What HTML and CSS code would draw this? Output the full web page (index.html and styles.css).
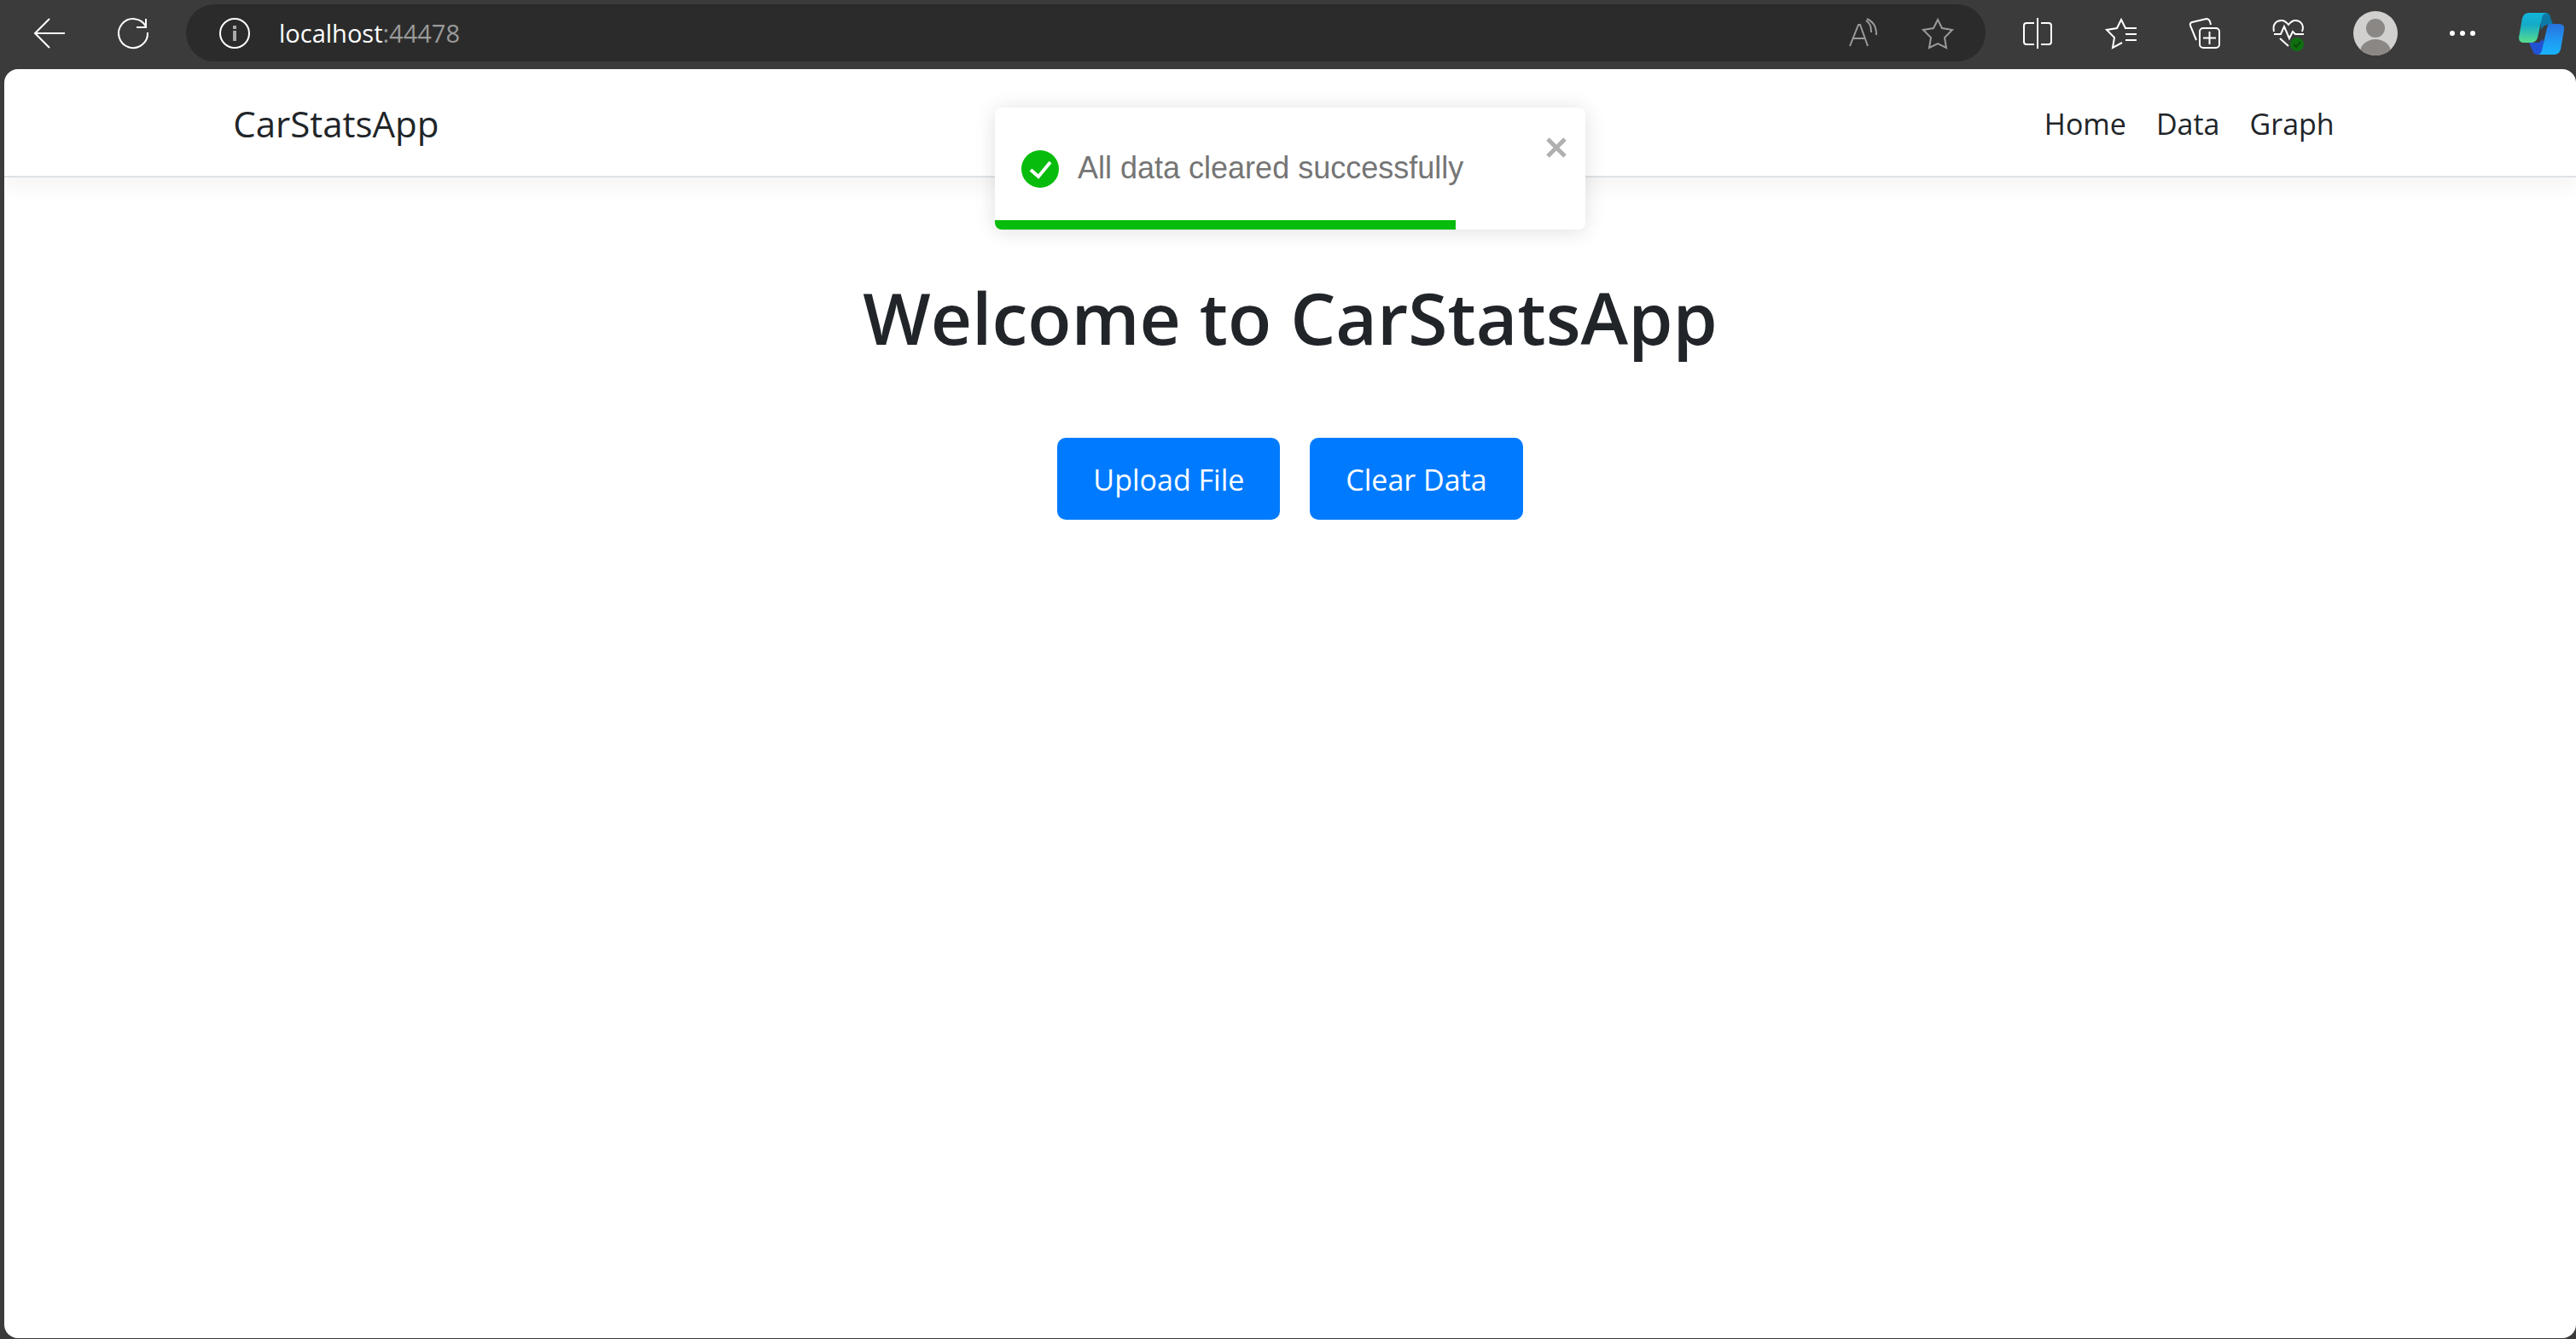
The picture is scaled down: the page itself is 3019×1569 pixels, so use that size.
FILE: index.html
```html
<!DOCTYPE html>
<html lang="en">
<head>
<meta charset="utf-8">
<meta name="viewport" content="width=device-width, initial-scale=1">
<title>CarStatsApp</title>
<link rel="stylesheet" href="styles.css">
</head>
<body>
<div class="toolbar">
  <button class="tool" type="button" aria-label="Back">
    <svg class="icon" viewBox="0 0 36 36"><path d="M36 18H1M18 1 1 18l17 17"/></svg>
  </button>
  <button class="tool" type="button" aria-label="Refresh">
    <svg class="icon" viewBox="0 0 36 36"><path d="M33 10A17 17 0 1 0 35 17M33 1v10H22"/></svg>
  </button>
  <div class="address">
    <svg class="icon" viewBox="0 0 36 36"><circle cx="18" cy="18" r="17"/><path class="info-mark" d="M18 15v12M18 9v4"/></svg>
    <div class="url"><span class="host">localhost</span>:44478</div>
    <button class="address-tool" type="button" aria-label="Read aloud">
      <svg class="icon" viewBox="0 0 36 36"><path d="M2 33 12 8h2l9 25M6 24h14M21 3c5 4 6 7 6 14M22 1c8 4 11 9 11 19"/></svg>
    </button>
    <button class="address-tool" type="button" aria-label="Add to favorites">
      <svg class="icon" viewBox="0 0 36 36"><path d="M18 2l5 10 12 2-9 9 2 12-10-5-10 5 2-12-9-9 12-2z"/></svg>
    </button>
  </div>
  <button class="tool" type="button" aria-label="Split screen">
    <svg class="icon" viewBox="0 0 36 36"><path d="M14 6H5q-3 0-3 3v19q0 3 3 3h9M22 6h9q3 0 3 3v19q0 3-3 3h-9M18 0v36"/></svg>
  </button>
  <button class="tool" type="button" aria-label="Favorites">
    <svg class="icon" viewBox="0 0 36 36"><path d="M36 12H23L18 2l-5 10-12 2 9 9-2 12 11-6M23 19h13M23 26h13"/></svg>
  </button>
  <button class="tool" type="button" aria-label="Collections">
    <svg class="icon" viewBox="0 0 36 36"><rect x="12" y="12" width="23" height="23" rx="4"/><path d="M23.500 16v15M16 23.500h15M8 26 1 9q-1-3 2-4l17-4q4 0 5 7"/></svg>
  </button>
  <button class="tool" type="button" aria-label="Browser essentials">
    <svg class="icon" viewBox="0 0 36 36"><path d="M1 16C-1 7 4 3 10 3q4 0 8 5 4-5 8-5c6 0 11 5 8 13M1 19h8l4-9 6 14 4-8 3 3h10M8 24l10 9"/><circle class="ok-dot" cx="28" cy="31" r="8"/><path class="ok-tick" d="M24 31l3 3 5-6"/></svg>
  </button>
  <button class="tool tool-wide" type="button" aria-label="Profile">
    <svg class="avatar" viewBox="0 0 52 52"><clipPath id="face"><circle cx="26" cy="26" r="26"/></clipPath><g clip-path="url(#face)"><path fill="#d2d0ce" d="M0 0h52v52H0z"/><circle cx="26" cy="20" r="11" fill="#8a8785"/><ellipse cx="26" cy="48" rx="18" ry="15" fill="#8a8785"/></g></svg>
  </button>
  <button class="tool" type="button" aria-label="Settings and more">
    <svg class="icon dots" viewBox="0 0 36 36"><circle cx="6" cy="18" r="3"/><circle cx="18" cy="18" r="3"/><circle cx="30" cy="18" r="3"/></svg>
  </button>
  <button class="tool tool-last" type="button" aria-label="Copilot">
    <svg class="copilot" viewBox="0 0 54 50">
      <defs>
        <linearGradient id="teal" x1="0" y1="0" x2="0" y2="1"><stop offset="0" stop-color="#12b5dc"/><stop offset=".4" stop-color="#14abc8"/><stop offset="1" stop-color="#58de8c"/></linearGradient>
        <linearGradient id="blue" x1="0" y1="0" x2="0" y2="1"><stop offset="0" stop-color="#2870de"/><stop offset=".5" stop-color="#2096f2"/><stop offset="1" stop-color="#18b4fa"/></linearGradient>
      </defs>
      <path fill="#0b78a6" d="M25 1h7q4 0 5 5l3 9h-6q-5 0-8 6z"/>
      <path fill="#2252d4" d="M12 36h9q5 0 7-5l2 8-4 11h-4q-5 0-6-5z"/>
      <path fill="url(#teal)" d="M12 1h21q-5 1-6 6l-5 23q-2 6-8 6H6q-6 0-6-6L4 7q2-6 8-6z"/>
      <path fill="url(#blue)" d="M37 14h10q7 0 6 7l-4 23q-2 6-8 6H23q3-1 4-5l6-26q1-5 4-5z"/>
    </svg>
  </button>
</div>
<div class="page">
  <header class="navbar">
    <a class="brand" href="#">CarStatsApp</a>
    <nav class="links">
      <a href="#">Home</a>
      <a href="#">Data</a>
      <a href="#">Graph</a>
    </nav>
  </header>
  <main class="content">
    <h1 class="title">Welcome to CarStatsApp</h1>
    <div class="actions">
      <button class="btn" type="button">Upload File</button>
      <button class="btn" type="button">Clear Data</button>
    </div>
  </main>
  <div class="toast" role="alert">
    <svg class="toast-icon" viewBox="0 0 44 44"><circle cx="22" cy="22" r="22" fill="#07bc0c"/><path d="M11 23l9 8 14-17" fill="none" stroke="#fff" stroke-width="4"/></svg>
    <span class="toast-text">All data cleared successfully</span>
    <button class="toast-close" type="button" aria-label="Close">
      <svg viewBox="0 0 24 24"><path d="M2 2l20 20M22 2 2 22"/></svg>
    </button>
    <div class="toast-progress" style="width: 78%"></div>
  </div>
</div>
</body>
</html>
```
FILE: styles.css
```css
* { box-sizing: border-box; }

body {
  margin: 0;
  min-height: 100vh;
  display: flex;
  flex-direction: column;
  background: #3b3b3b;
  color: #212529;
  font-family: "Open Sans", "Noto Sans", sans-serif;
  font-size: 34px;
}

button {
  border: 0;
  padding: 0;
  background: none;
  font: inherit;
}

svg { display: block; }

a { color: inherit; text-decoration: none; }

/* Browser toolbar */
.toolbar {
  display: flex;
  align-items: center;
  padding: 5px 0 9px 9px;
  color: #fff;
}

.tool {
  flex: none;
  width: 98px;
  display: flex;
  justify-content: center;
  color: #fff;
}

.tool-wide { width: 106px; }
.tool-last { width: 84px; padding-left: 4px; }

.icon {
  flex: none;
  width: 36px;
  height: 36px;
  fill: none;
  stroke: currentColor;
  stroke-width: 2;
  overflow: visible;
}

.dots { fill: #fff; stroke: none; }
.info-mark { stroke: #aaa; stroke-width: 4; }
.ok-dot { fill: #0f7010; stroke: none; }
.ok-tick { stroke: #0a4a0c; }
.avatar { width: 52px; height: 52px; }
.copilot { width: 54px; height: 50px; }

.address {
  flex: 1;
  height: 67px;
  display: flex;
  align-items: center;
  margin: 0 12px 0 13px;
  padding: 0 38px 0 39px;
  border-radius: 34px;
  background: #2b2b2b;
}

.url {
  flex: 1;
  padding-left: 34px;
  font-size: 29px;
  line-height: 36px;
  color: #9a9a9a;
}

.host { color: #fff; }

.address-tool { color: #9a9a9a; }
.address-tool + .address-tool { margin-left: 51px; }

/* Page */
.page {
  position: relative;
  flex: 1;
  margin: 0 0 1px 5px;
  border-radius: 16px;
  background: #fff;
  overflow: hidden;
}

.navbar {
  display: flex;
  justify-content: space-between;
  align-items: center;
  padding: 34px 9.4% 31px 8.9%;
  border-bottom: 2px solid #dee2e6;
  box-shadow: 0 10px 26px rgba(0, 0, 0, .05);
  line-height: 60px;
}

.brand { font-size: 42px; }

.links { display: flex; gap: 35px; }

.content {
  padding: 111px 32px 64px;
  text-align: center;
}

.title {
  margin: 0 0 88px;
  font-size: 84px;
  font-weight: 600;
  line-height: 106px;
}

.actions {
  display: flex;
  justify-content: center;
  gap: 35px;
}

.btn {
  padding: 23px 42px 21px;
  border-radius: 10px;
  background: #007bff;
  color: #fff;
  line-height: 52px;
}

/* Toast notification */
.toast {
  position: absolute;
  top: 45px;
  left: 50%;
  width: 692px;
  height: 143px;
  display: flex;
  align-items: center;
  padding: 0 22px 0 31px;
  border-radius: 8px;
  background: #fff;
  color: #757575;
  font-family: "Liberation Sans", Arial, sans-serif;
  font-size: 36px;
  line-height: 42px;
  box-shadow: 0 2px 24px rgba(0, 0, 0, .13);
  transform: translateX(-50%);
  overflow: hidden;
}

.toast-icon { width: 44px; height: 44px; }

.toast-text { flex: 1; padding: 0 0 2px 22px; }

.toast-close {
  align-self: flex-start;
  padding-top: 35px;
}

.toast-close svg {
  width: 24px;
  height: 24px;
  fill: none;
  stroke: #b0b0b0;
  stroke-width: 5;
}

.toast-progress {
  position: absolute;
  left: 0;
  bottom: 0;
  height: 11px;
  background: #07bc0c;
}
```
